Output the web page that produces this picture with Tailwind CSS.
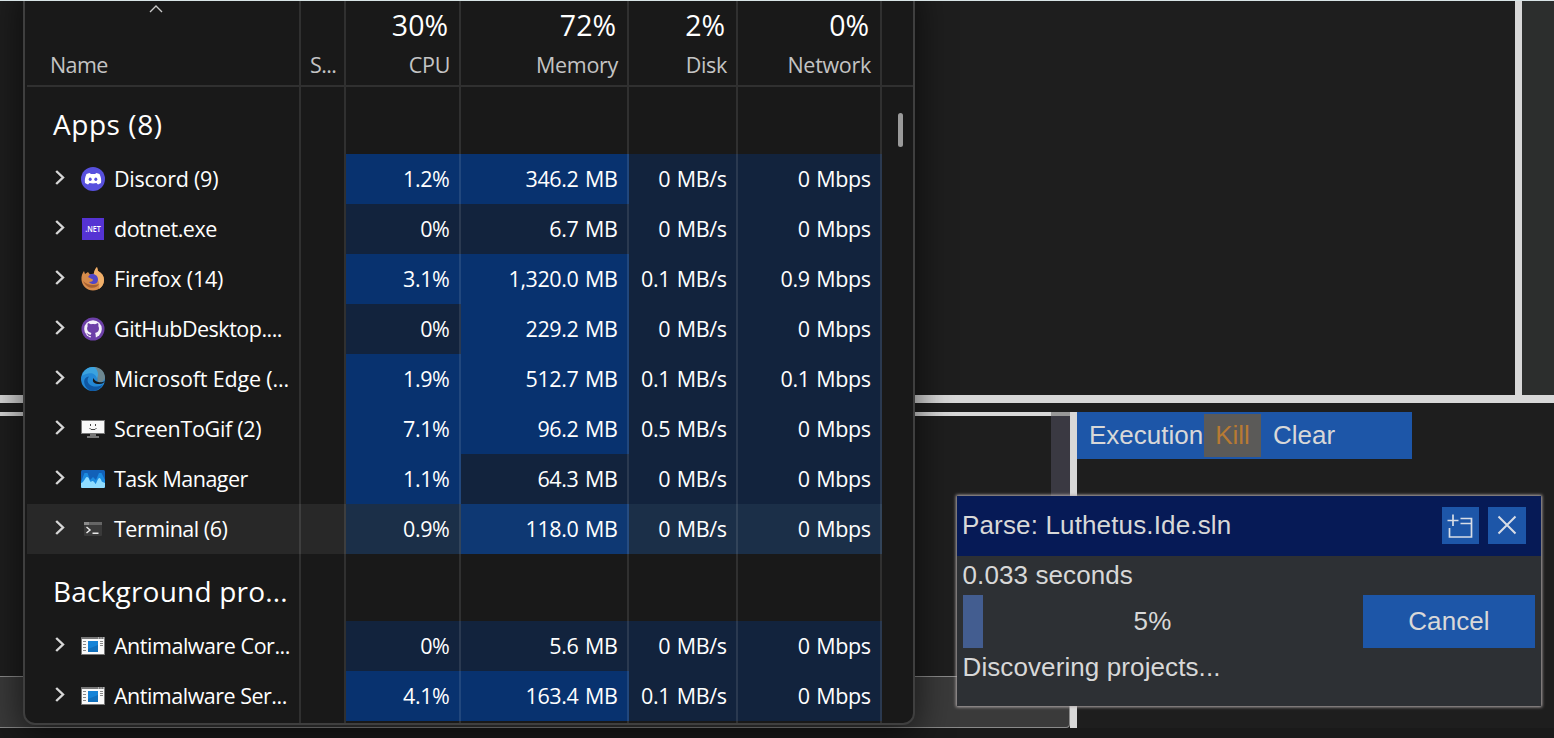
<!DOCTYPE html>
<html lang="en">
<head>
<meta charset="utf-8">
<title>Task Manager</title>
<script src="https://cdn.jsdelivr.net/npm/@tailwindcss/browser@4"></script>
</head>
<body class="relative h-[738px] w-[1554px] overflow-hidden bg-[#1e1e1e] font-['Liberation_Sans',sans-serif] text-[26px] text-[#d8d8d8]">

<!-- IDE panels -->
<div class="flex h-full flex-col">
  <div class="h-px shrink-0 bg-[#d8e4e6]"></div>
  <div class="flex h-[394px] shrink-0">
    <div class="flex-1"></div>
    <div class="w-[7px] bg-[#d8d8d8]"></div>
    <div class="w-8 bg-[#2c2e2d]"></div>
  </div>
  <div class="h-2 shrink-0 bg-[#d8d8d8]"></div>
  <div class="mt-[9px] flex h-[316px] shrink-0">
    <div class="flex w-[1070px] flex-col">
      <div class="flex h-[264px]">
        <div class="flex-1 border-t-4 border-[#d8d8d8]"></div>
        <div class="w-[19px] border-t-4 border-[#989898] bg-[#3a3942]"></div>
      </div>
      <div class="h-[52px] rounded-br-sm border-y border-r border-[#8a8a8a] bg-[#3a3a3a]"></div>
    </div>
    <div class="w-[7px] bg-[#d8d8d8]"></div>
    <div class="flex h-[47px] w-[335px] items-center bg-[#1d56a8]">
      <div class="w-[127px] whitespace-nowrap pl-3">Execution</div>
      <div class="flex h-[43px] w-[57px] items-center justify-center bg-[#5b5a58] text-[#b87a33]">Kill</div>
      <div class="pl-3">Clear</div>
    </div>
  </div>
  <div class="flex-1 bg-[#1a1a1a]"></div>
</div>

<!-- Task manager window -->
<div id="tm" class="absolute left-[23px] -top-4 flex h-[741px] w-[892px] flex-col overflow-hidden rounded-xl border-2 border-[#3f3f3f] bg-[#191919] pt-[15px] font-['Open_Sans','Noto_Sans',sans-serif] text-[21.5px] text-white shadow-[0_6px_34px_4px_rgba(0,0,0,0.55)]"></div>
<div class="absolute left-0 top-0 h-px w-full bg-[#d8e4e6]"></div>

<!-- Progress dialog -->
<div class="absolute left-[957px] top-[496px] flex h-[210px] w-[584px] flex-col bg-[#2d3034] tracking-[0.1px] shadow-[0_0_3px_1px_#b8b0b0]">
  <div class="flex h-[60px] items-center bg-[#061a56] pb-[2px] pl-[5px] pr-[15px]">
    <div class="flex-1 tracking-[0.15px]">Parse: Luthetus.Ide.sln</div>
    <div class="mr-[9px] flex h-[37px] w-[37px] items-center justify-center bg-[#1d56a8]">
      <svg width="27" height="27" viewBox="0 0 27 27" fill="none" stroke="#d8dde6" stroke-width="1.7"><path d="M0.500 8.500H11.500M6 2.500V14M13.500 6.500H24.500V25H2.500V16M13.500 11.500H24.500"/></svg>
    </div>
    <div class="flex h-[37px] w-[38px] items-center justify-center bg-[#1d56a8]">
      <svg width="20" height="20" viewBox="0 0 20 20" fill="none" stroke="#d8dde6" stroke-width="2"><path d="M1.500 1.500 18.500 18.500M18.500 1.500 1.500 18.500"/></svg>
    </div>
  </div>
  <div class="flex flex-1 flex-col px-[6px]">
    <div class="-ml-[0.5px] flex h-[39px] items-center">0.033 seconds</div>
    <div class="flex h-[53px] justify-between">
      <div class="flex w-[379px]">
        <div class="w-5 bg-[#435d90]"></div>
        <div class="-ml-5 flex w-[379px] items-center justify-center">5%</div>
      </div>
      <div class="flex w-[172px] items-center justify-center bg-[#1d56a8]">Cancel</div>
    </div>
    <div class="-ml-[0.5px] flex h-[39px] items-center">Discovering projects...</div>
  </div>
</div>

<script>
const discord = `<svg width="24" height="24" viewBox="0 0 24 24"><circle cx="12" cy="12" r="12" fill="#5750dd"/><path fill="#fff" d="M8.500 6 10 7h4l1.500-1 3 1c1.500 3 2 6 1.500 9l-3 1.500-1.500-1.500c-2 .6-5 .6-7 0L7 17.500 4 16c-.5-3 0-6 1.500-9z"/><ellipse cx="9.200" cy="12.300" rx="1.500" ry="1.800" fill="#5750dd"/><ellipse cx="14.800" cy="12.300" rx="1.500" ry="1.800" fill="#5750dd"/></svg>`;
const dotnet = `<svg width="22" height="22" viewBox="0 0 22 22"><path fill="#5533d3" d="M0 0h22v22H0z"/><text x="11" y="13.700" fill="#fff" font-size="8" font-weight="600" text-anchor="middle" textLength="15.500" lengthAdjust="spacingAndGlyphs" font-family="Open Sans">.NET</text></svg>`;
const firefox = `<svg width="24" height="24" viewBox="0 0 24 24"><path fill="#d68b4b" d="M.5 13C0 9 1.500 6 3 4l1 3 3-2 2 2.500 4-1c0-2 1-4 3-6.500l1 4c4 2 6 5 6 9 0 6-5 10.500-11 10.500S1.200 19 .5 13z"/><path fill="#f0b06a" d="M16 0l1 4c4 2 6 5 6 9 0 4-2 7-5 9 1-5 0-9-5-15 0-3 1-5 3-7z"/><path fill="#a85f30" d="M2 14c4 4 10 5 16 3-2 5-12 6-16-3z"/><path fill="#5046c8" d="M9 7.500c4-1.500 8 1 8 5 0 5-6 6-9 2.500 3 0 4-1 4-2.500L7 10z"/></svg>`;
const github = `<svg width="24" height="24" viewBox="0 0 24 24"><circle cx="12" cy="12" r="11.500" fill="#6d40a8"/><circle cx="12" cy="12" r="8.800" fill="#f4f0fa"/><path fill="#6d40a8" d="M7 6l3 1.200c1.300-.3 2.700-.3 4 0L17 6c.6 1.300.6 2 .3 3 1.500 2.700.7 6.300-3.300 7 .6.700.8 1.500.8 5h-5v-2c-3 .5-3-2-4.500-2.700 2-.3 2 1.800 4.500 1.400.1-.8.300-1.300.7-1.700-4-.7-5.300-4-3.800-7-.3-1-.3-1.700.3-3z"/></svg>`;
const edge = `<svg width="24" height="24" viewBox="0 0 24 24"><circle cx="12" cy="12" r="12" fill="#2388d6"/><path fill="#6c8790" d="M13 0c7 0 11 5 11 11-.4 3-4 5-7.500 4C17 10 16 5 8 3z"/><path fill="#3ba3df" d="M1 9C3 2 9-1 14 .5c3 3 4 7 2 11C15 6 8 4 1 9z"/><path fill="#0f58a4" d="M8 9.500c-4 5 1 11 8 10 2 0 4-1 6-2C18 24 12 25 8 23 1 18 2 10 8 9.500z"/><path fill="#191919" d="M12.500 11c-2 4 1 6 6 6 3 0 4-1 5.500-3-1.500.8-3.500 1.500-5.500 1.200-3-.2-5-1.400-6-4.200z"/></svg>`;
const gif = `<svg width="24" height="24" viewBox="0 0 24 24"><path fill="#777" d="M0 3h24v14H15v2h3v2H6v-2h3v-2H0z"/><path fill="#f8f8f8" d="M1 4h22v12H1z"/><path fill="none" stroke="#444" d="M9.500 7v2M14.500 7v2M8.500 11l1.500 1.500h4l1.500-1.500"/></svg>`;
const task = `<svg width="24" height="24" viewBox="0 0 24 24"><rect y="3" width="24" height="18" rx="1.500" fill="#1261b8"/><path fill="#1b8be0" d="M0 15l3.500-9h3L9 13l3-3 3 3 3-7h2.500l3.500 7v7H0z"/><path fill="#8fdcff" d="M0 16c3 0 4-6 6-6 2.500 0 2 4 4 5 1-2 3-1 4.500 2 1 0 2-6 4-6 1.500 0 2 4 3 4l2.500 1v3.500c0 .8-.5 1.500-1.500 1.500h-21C.5 21 0 20.500 0 19.500z"/></svg>`;
const term = `<svg width="24" height="24" viewBox="0 0 24 24"><rect x="3" y="5" width="18" height="14" rx="1" fill="#3a3a3a"/><path fill="#8a8a8a" d="M3 5h5.500v3H3z"/><path fill="#666" d="M9 5h12v3H9z"/><path fill="none" stroke="#e8e8e8" stroke-width="1.500" d="M5.500 10l3.500 3-3.500 3M11.500 16.200h6"/></svg>`;
const exe = `<svg width="24" height="24" viewBox="0 0 24 24"><path fill="#777" d="M0 3h24v18H0z"/><path fill="#fafafa" d="M1 5h22v15H1z"/><path stroke="#e8e8e8" d="M17 4h1M19.500 4h1M22 4h1"/><path stroke="#888" d="M2 7.500h3M2 10.500h3M2 13.500h3M2 16.500h3M19 7.500h3M19 9.500h3M19 11.500h3"/><path fill="#1583d7" d="M7 7h10v11H7z"/><path fill="#1070bd" d="M7 15l10-4v7H7z"/></svg>`;
const chev = `<svg class="mr-4 -translate-y-[1.5px]" width="10" height="16" viewBox="0 0 10 16" fill="none" stroke="#d6d6d6" stroke-width="2.400"><path d="M1.200 1.500 8 8 1.200 14.500"/></svg>`;
const cols = 'grid grid-cols-[276px_45px_115px_168px_109px_144px_31px]';
const line = 'border-r-2 border-white/10';
const lo = 'bg-[#12233d]', hi = 'bg-[#08326f]', loH = 'bg-[#1b2f48]', hiH = 'bg-[#0e3873]';
const head = [['30%','CPU'],['72%','Memory'],['2%','Disk'],['0%','Network']];
let h = `<div class="${cols} relative ml-[2px] -mr-[2px] h-[86px] shrink-0 border-b-2 border-[#303030]">
  <div class="${line} relative -ml-[2px] mr-[2px] pl-[25px] pt-12 leading-[32px] tracking-[-0.6px] text-[#c4c4c4]">Name
    <svg class="absolute left-[124px] top-[3px]" width="14" height="9" viewBox="0 0 14 9" fill="none" stroke="#c8c8c8" stroke-width="1.400"><path d="M1 8 7 2l6 6"/></svg></div>
  <div class="${line} -ml-[2px] mr-[2px] pl-[9px] pt-12 leading-[32px] tracking-[-0.6px] text-[#c4c4c4]">S...</div>` +
  head.map(([p,n]) => `<div class="${line} -ml-[2px] mr-[2px] flex flex-col items-end pr-[9px]"><div class="mt-[3px] h-[40px] pr-[2px] text-[28.500px] leading-[42px]">${p}</div><div class="mt-[5px] leading-[32px] tracking-[-0.3px] text-[#c4c4c4]">${n}</div></div>`).join('') + `<div></div></div>`;
const group = (t, ls) => `<div class="${cols} h-[67px] shrink-0"><div class="${line} flex items-center whitespace-nowrap pl-[28px] pt-[7px] text-[28px]" style="letter-spacing:${ls}px">${t}</div>${`<div class="${line}"></div>`.repeat(5)}<div></div></div>`;
const row = (icon, name, ls, vals, heat, hover) => `<div class="${cols} h-[50px] shrink-0"><div class="${line} ${hover ? 'bg-[#282828]' : ''} ml-[2px] flex items-center whitespace-nowrap pl-[28px]">${chev}<div class="mr-[9px] flex w-6 justify-center">${icon}</div><span style="letter-spacing:${ls}px">${name}</span></div><div class="${line} ${hover ? 'bg-[#282828]' : ''}"></div>` +
  vals.map((v,i) => `<div class="${line} ${heat[i]==='1' ? (hover ? hiH : hi) : (hover ? loH : lo)} flex items-center justify-end whitespace-nowrap pr-[9.5px] tracking-[-0.400px] [word-spacing:1.5px]">${v}</div>`).join('') + `<div></div></div>`;
h += group('Apps (8)', 0.55);
h += row(discord,'Discord (9)',-0.25,['1.2%','346.2 MB','0 MB/s','0 Mbps'],'1100');
h += row(dotnet,'dotnet.exe',-0.5,['0%','6.7 MB','0 MB/s','0 Mbps'],'0000');
h += row(firefox,'Firefox (14)',-0.2,['3.1%','1,320.0 MB','0.1 MB/s','0.9 Mbps'],'1100');
h += row(github,'GitHubDesktop....',-0.5,['0%','229.2 MB','0 MB/s','0 Mbps'],'0100');
h += row(edge,'Microsoft Edge (...',-0.17,['1.9%','512.7 MB','0.1 MB/s','0.1 Mbps'],'1100');
h += row(gif,'ScreenToGif (2)',-0.3,['7.1%','96.2 MB','0.5 MB/s','0 Mbps'],'1100');
h += row(task,'Task Manager',-0.5,['1.1%','64.3 MB','0 MB/s','0 Mbps'],'1000');
h += row(term,'Terminal (6)',-0.48,['0.9%','118.0 MB','0 MB/s','0 Mbps'],'0100',true);
h += group('Background pro...', 0.2);
h += row(exe,'Antimalware Cor...',-0.47,['0%','5.6 MB','0 MB/s','0 Mbps'],'0000');
h += row(exe,'Antimalware Ser...',-0.5,['4.1%','163.4 MB','0.1 MB/s','0 Mbps'],'1100');
h += `<div class="${cols} flex-1">${`<div class="${line}"></div>`.repeat(6)}<div></div></div>`;
h += `<div class="absolute left-[873px] top-[127px] h-[34px] w-[5px] rounded-full bg-[#9a9a9a]"></div>`;
document.getElementById('tm').innerHTML = h;
</script>
</body>
</html>
